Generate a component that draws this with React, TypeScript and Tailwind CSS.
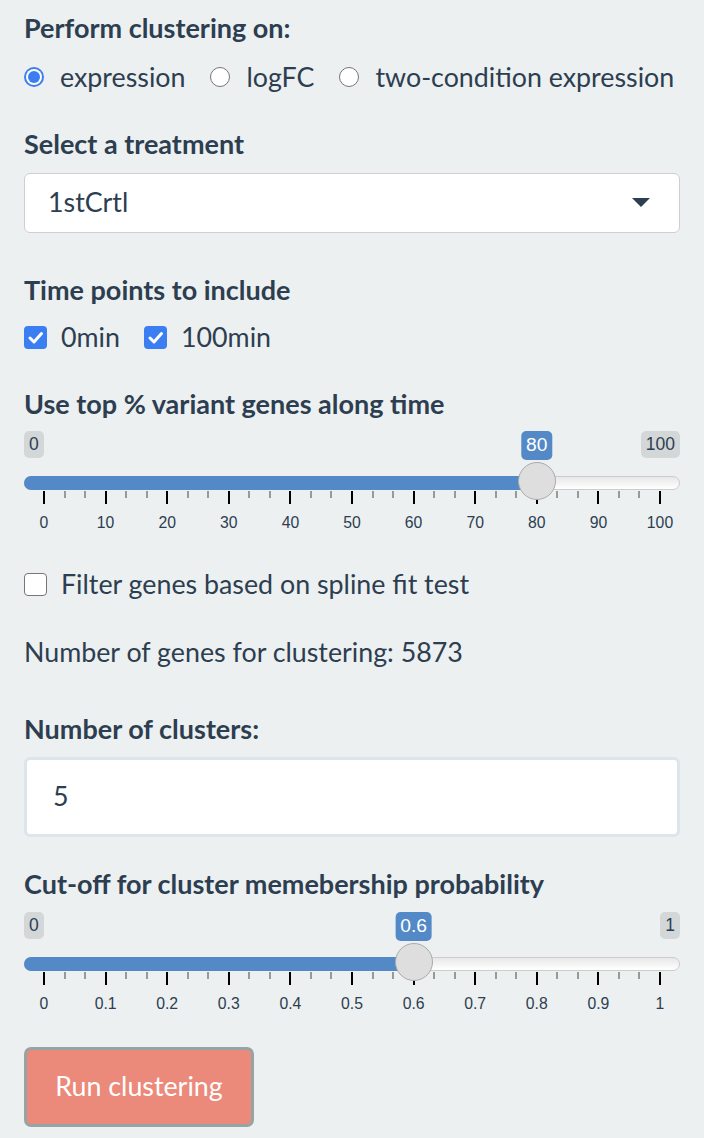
import React from "react";

const GRID_PAD = 20;

function pos(p: number) {
  return `calc(${GRID_PAD}px + (100% - ${GRID_PAD * 2}px) * ${p})`;
}

function Slider({
  value,
  max,
  labels,
}: {
  value: number;
  max: number;
  labels: string[];
}) {
  const p = value / max;
  const segs = labels.length - 1;
  const minor: number[] = [];
  for (let i = 0; i < segs; i++) {
    minor.push((i + 1 / 3) / segs, (i + 2 / 3) / segs);
  }
  return (
    <div className="relative h-[104px] w-full font-['Liberation_Sans',Arial,sans-serif]">
      <span className="absolute left-0 top-0 rounded-[5px] bg-black/10 px-[5px] text-[17.5px] leading-[24px] pt-[1px] pb-[2px] text-[#2c3e50]">
        0
      </span>
      <span className="absolute right-0 top-0 rounded-[5px] bg-black/10 px-[5px] text-[17.5px] leading-[24px] pt-[1px] pb-[2px] text-[#2c3e50]">
        {labels[labels.length - 1]}
      </span>
      <span
        className="absolute top-0 -translate-x-1/2 rounded-[5px] bg-[#5489c7] px-[5px] text-[19.25px] leading-[26px] pt-[1px] pb-[2px] text-white"
        style={{ left: pos(p) }}
      >
        {labels[Math.round(p * segs)]}
      </span>

      <div className="absolute left-0 right-0 top-[45px] h-[14px] rounded-full border border-[#cccccc] bg-gradient-to-b from-[#e8e8e8] to-white" />
      <div
        className="absolute left-0 top-[45px] h-[14px] rounded-l-full bg-[#5489c7]"
        style={{ width: pos(p) }}
      />

      {labels.map((l, i) => (
        <React.Fragment key={l}>
          <span
            className="absolute top-[60px] h-[13px] w-[2px] -translate-x-1/2 bg-black"
            style={{ left: pos(i / segs) }}
          />
          <span
            className="absolute top-[82px] -translate-x-1/2 text-[15.75px] leading-[20px] text-[#2c3e50]"
            style={{ left: pos(i / segs) }}
          >
            {l}
          </span>
        </React.Fragment>
      ))}
      {minor.map((m) => (
        <span
          key={m}
          className="absolute top-[60px] h-[7px] w-[2px] -translate-x-1/2 bg-[#999999]"
          style={{ left: pos(m) }}
        />
      ))}

      <span
        className="absolute top-[31px] h-[38px] w-[38px] -translate-x-1/2 rounded-full border border-[#ababab] bg-[#dedede]"
        style={{ left: pos(p) }}
      />
    </div>
  );
}

function Radio({ checked, label }: { checked?: boolean; label: string }) {
  return (
    <label className="flex items-center gap-[16px]">
      {checked ? (
        <span className="flex h-[20px] w-[20px] items-center justify-center rounded-full bg-[#3a7ef2]">
          <span className="flex h-[16px] w-[16px] items-center justify-center rounded-full bg-white">
            <span className="h-[12px] w-[12px] rounded-full bg-[#3a7ef2]" />
          </span>
        </span>
      ) : (
        <span className="h-[20px] w-[20px] rounded-full border-[1.5px] border-[#767676] bg-white" />
      )}
      <span>{label}</span>
    </label>
  );
}

function Check({ checked, label }: { checked?: boolean; label: string }) {
  return (
    <label className="flex items-center gap-[14px]">
      {checked ? (
        <span className="flex h-[23px] w-[23px] items-center justify-center rounded-[4px] bg-[#3a7ef2]">
          <svg width="17" height="17" viewBox="0 0 17 17">
            <path
              d="M3 9 L7 13 L14.5 4.5"
              fill="none"
              stroke="white"
              strokeWidth="3"
              strokeLinecap="round"
              strokeLinejoin="round"
            />
          </svg>
        </span>
      ) : (
        <span className="h-[23px] w-[23px] rounded-[4px] border-[1.5px] border-[#767676] bg-white" />
      )}
      <span>{label}</span>
    </label>
  );
}

const labelCls = "font-bold text-[27px]";

export default function App() {
  const pct = ["0", "10", "20", "30", "40", "50", "60", "70", "80", "90", "100"];
  const prob = ["0", "0.1", "0.2", "0.3", "0.4", "0.5", "0.6", "0.7", "0.8", "0.9", "1"];

  return (
    <div className="min-h-screen w-[704px] bg-[#ecf0f1] px-[24px] pt-[9px] pb-[11px] font-['Lato',sans-serif] text-[26.8px] leading-[37.5px] text-[#2c3e50]">
      <div className={labelCls}>Perform clustering on:</div>
      <div className="mt-[12px] flex items-center gap-[25px]">
        <Radio checked label="expression" />
        <Radio label="logFC" />
        <Radio label="two-condition expression" />
      </div>

      <div className={`${labelCls} mt-[29px]`}>Select a treatment</div>
      <div className="mt-[10px] flex h-[60px] items-center justify-between rounded-[6px] border border-[#cfcfcf] bg-white pl-[23px] pr-[29px]">
        <span>1stCrtl</span>
        <span className="h-0 w-0 border-x-[9px] border-t-[9px] border-x-transparent border-t-[#2c3e50]" />
      </div>

      <div className={`${labelCls} mt-[38.5px]`}>Time points to include</div>
      <div className="mt-[10.5px] flex items-center gap-[24px]">
        <Check checked label="0min" />
        <Check checked label="100min" />
      </div>

      <div className={`${labelCls} mt-[28.5px]`}>Use top % variant genes along time</div>
      <div className="mt-[8.5px]">
        <Slider value={80} max={100} labels={pct} />
      </div>

      <div className="mt-[31px]">
        <Check label="Filter genes based on spline fit test" />
      </div>

      <div className="mt-[30.5px]">Number of genes for clustering: 5873</div>

      <div className={`${labelCls} mt-[38.5px]`}>Number of clusters:</div>
      <div className="mt-[9.5px] flex h-[80px] items-center rounded-[6px] border-[3.5px] border-[#dce4ec] bg-white px-[26px]">
        5
      </div>

      <div className={`${labelCls} mt-[28px]`}>Cut-off for cluster memebership probability</div>
      <div className="mt-[9.5px]">
        <Slider value={0.6} max={1} labels={prob} />
      </div>

      <button className="mt-[31px] flex h-[80px] w-[230px] items-center justify-center rounded-[7px] border-[3.5px] border-[#95a5a6] bg-[#eb8a7a] text-white">
        Run clustering
      </button>
    </div>
  );
}
